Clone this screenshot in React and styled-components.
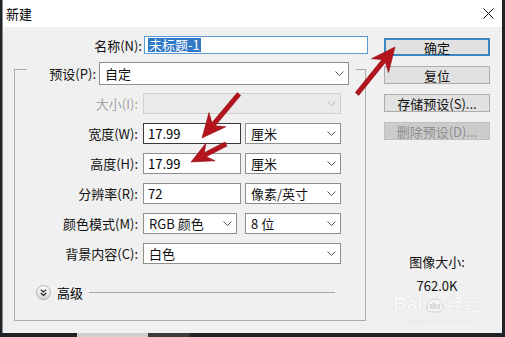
import React from 'react';
import styled, { createGlobalStyle } from 'styled-components';

const Global = createGlobalStyle`
  html, body { margin: 0; padding: 0; background: #1f2429; }
  body {
    font-family: "Noto Sans CJK SC", "Microsoft YaHei", sans-serif;
    font-size: 13px;
    color: #000;
    width: 505px;
    height: 337px;
    overflow: hidden;
  }
  * { box-sizing: border-box; }
`;

const Page = styled.div`
  position: relative;
  width: 505px;
  height: 337px;
  display: flex;
  flex-direction: column;
`;

const Window = styled.div`
  margin-left: 2px;
  width: 500px;
  height: 333px;
  background: #f0f0f0;
  border-left: 1px solid #8c8c8c;
  display: flex;
  flex-direction: column;
`;

const TitleBar = styled.div`
  height: 27px;
  flex: none;
  background: #fff;
  display: flex;
  align-items: center;
  justify-content: space-between;
  padding: 0 8px 0 3px;
  font-size: 13px;
`;

const Body = styled.div`
  flex: 1;
  display: flex;
  padding-top: 9px;
`;

const LeftCol = styled.div`
  width: 367px;
  flex: none;
  display: flex;
  flex-direction: column;
`;

const RightCol = styled.div`
  display: flex;
  flex-direction: column;
  padding: 2px 0 0 14px;
  width: 120px;
`;

const Row = styled.div`
  display: flex;
  align-items: center;
  height: ${p => p.$h || 21}px;
`;

const Label = styled.div`
  width: ${p => p.$w}px;
  flex: none;
  margin-right: ${p => p.$gap ?? 5}px;
  text-align: right;
  white-space: nowrap;
  line-height: 17px;
  color: ${p => (p.$disabled ? '#a3a3a3' : '#111')};
`;

const NameBox = styled.div`
  width: 224px;
  height: 18px;
  background: #fff;
  border: 1px solid #5b9bd5;
  display: flex;
  align-items: center;
  padding-left: 3px;
`;

const Selected = styled.span`
  background: #3179c6;
  color: #fff;
  line-height: 14px;
  padding: 0 1px;
`;

const Group = styled.div`
  margin-left: 11px;
  width: 352px;
  flex: none;
  display: flex;
  flex-direction: column;
`;

const GroupHead = styled.div`
  display: flex;
  align-items: flex-start;
  height: 31px;
`;

const HeadEdge = styled.div`
  margin-top: 15px;
  height: 16px;
  width: ${p => (p.$w ? `${p.$w}px` : 'auto')};
  flex: ${p => (p.$w ? 'none' : 1)};
  border-top: 1px solid #a9a9a9;
  ${p => (p.$side === 'left' ? 'border-left' : 'border-right')}: 1px solid #a9a9a9;
`;

const HeadContent = styled.div`
  display: flex;
  align-items: center;
  padding: 8px 7px 0 0;
`;

const GroupBody = styled.div`
  border: 1px solid #a9a9a9;
  border-top: none;
  display: flex;
  flex-direction: column;
  gap: 9px;
  padding: 8px 0 20px 0;
`;

const TextBox = styled.div`
  width: ${p => p.$w}px;
  flex: none;
  height: 21px;
  margin-right: 4px;
  background: #fff;
  border: 1px solid ${p => (p.$focused ? '#3a3a3a' : '#8f8f8f')};
  display: flex;
  align-items: center;
  padding-left: 4px;
  font-size: 13px;
`;

const SelectBox = styled.div`
  width: ${p => p.$w}px;
  flex: none;
  height: ${p => p.$h || 21}px;
  margin-right: ${p => p.$mr || 0}px;
  background: ${p => (p.$disabled ? '#eaeaea' : '#fff')};
  border: 1px solid ${p => (p.$disabled ? '#cfcfcf' : '#8f8f8f')};
  display: flex;
  align-items: center;
  justify-content: space-between;
  padding: 0 4px 0 5px;
  font-size: 13px;
  color: #111;
`;

const AdvRow = styled.div`
  display: flex;
  align-items: center;
  margin: 12px 0 0 21px;
  height: 15px;
`;

const AdvText = styled.span`
  margin: 0 6px;
  line-height: 17px;
`;

const Rule = styled.div`
  width: 246px;
  height: 1px;
  background: #a8a8a8;
`;

const Buttons = styled.div`
  display: flex;
  flex-direction: column;
  gap: 10px;
`;

const Button = styled.div`
  width: 106px;
  height: 18px;
  display: flex;
  align-items: center;
  justify-content: center;
  font-size: 13px;
  background: ${p => (p.$disabled ? '#cccccc' : '#e1e1e1')};
  color: ${p => (p.$disabled ? '#8e8e8e' : '#111')};
  border: ${p => (p.$primary ? '2px solid #3d86c0' : `1px solid ${p.$disabled ? '#bfbfbf' : '#adadad'}`)};
`;

const Info = styled.div`
  margin-top: 113px;
  width: 106px;
  display: flex;
  flex-direction: column;
  align-items: center;
  color: #111;
`;

const InfoLine = styled.div`
  line-height: 17px;
  margin-bottom: ${p => p.$mb || 0}px;
  font-size: 13px;
`;

const Watermark = styled.div`
  margin-top: 1px;
  font-family: "Liberation Sans", Arial, sans-serif;
  font-weight: bold;
  font-size: 19px;
  line-height: 18px;
  color: #f7f7f7;
  text-shadow: 0 0 1px #cfcfcf;
  white-space: nowrap;
  display: flex;
  align-items: center;
  gap: 2px;
`;

const WatermarkCn = styled.span`
  font-family: "Noto Sans CJK SC", sans-serif;
  font-size: 17px;
`;

const WatermarkUrl = styled.div`
  margin-top: 3px;
  font-family: "Liberation Serif", serif;
  font-size: 9px;
  color: #f4f4f4;
  text-shadow: 0 0 1px #d8d8d8;
  white-space: nowrap;
`;

const BottomStrip = styled.div`
  height: 4px;
  display: flex;
`;

const StripSeg = styled.div`
  width: ${p => p.$w}px;
  background: ${p => p.$c};
  flex: ${p => (p.$w ? 'none' : 1)};
`;

const Overlay = styled.svg`
  position: absolute;
  left: 0;
  top: 0;
  pointer-events: none;
`;

const Chevron = ({ disabled }) => (
  <svg width="9" height="5" viewBox="0 0 9 5">
    <path d="M0.5 0.5 L4.5 4.5 L8.5 0.5" fill="none" stroke={disabled ? '#b5b5b5' : '#555'} strokeWidth="1" />
  </svg>
);

const Select = ({ w, h, mr, disabled, children }) => (
  <SelectBox $w={w} $h={h} $mr={mr} $disabled={disabled}>
    <span>{children}</span>
    <Chevron disabled={disabled} />
  </SelectBox>
);

const CloseIcon = () => (
  <svg width="11" height="11" viewBox="0 0 11 11">
    <path d="M0.5 0.5 L10.5 10.5 M10.5 0.5 L0.5 10.5" stroke="#111" strokeWidth="1" />
  </svg>
);

const AdvIcon = () => (
  <svg width="15" height="15" viewBox="0 0 15 15">
    <defs>
      <linearGradient id="advg" x1="0" y1="0" x2="0" y2="1">
        <stop offset="0" stopColor="#ffffff" />
        <stop offset="1" stopColor="#d6d6d6" />
      </linearGradient>
    </defs>
    <circle cx="7.5" cy="7.5" r="7" fill="url(#advg)" stroke="#b0b0b0" />
    <path d="M4.8 4.6 L7.5 7 L10.2 4.6 M4.8 8 L7.5 10.4 L10.2 8" fill="none" stroke="#222" strokeWidth="1.2" />
  </svg>
);

const BaiduPaw = () => (
  <svg width="20" height="17" viewBox="0 0 20 17">
    <path d="M2 12 C2 6 6 3 10 3 C14 3 18 6 18 12 C18 15 15 16 10 16 C5 16 2 15 2 12 Z" fill="#f7f7f7" stroke="#cfcfcf" />
    <text x="10" y="13" textAnchor="middle" fontFamily="Liberation Sans, sans-serif" fontWeight="bold" fontSize="9" fill="#d8d8d8">du</text>
  </svg>
);

function arrowPoints(tail, tip, L, hw, sw) {
  const dx = tip[0] - tail[0];
  const dy = tip[1] - tail[1];
  const len = Math.hypot(dx, dy);
  const ux = dx / len, uy = dy / len;
  const px = -uy, py = ux;
  const bx = tip[0] - ux * L, by = tip[1] - uy * L;
  const h = sw / 2;
  const pts = [
    [tail[0] + px * h, tail[1] + py * h],
    [bx + ux * 3 + px * h, by + uy * 3 + py * h],
    [bx - ux * 3 + px * hw, by - uy * 3 + py * hw],
    [tip[0], tip[1]],
    [bx - ux * 3 - px * hw, by - uy * 3 - py * hw],
    [bx + ux * 3 - px * h, by + uy * 3 - py * h],
    [tail[0] - px * h, tail[1] - py * h],
  ];
  return pts.map(p => p.map(v => v.toFixed(1)).join(',')).join(' ');
}

const arrows = [
  { tail: [357, 94], tip: [395, 47], L: 21, hw: 11 },
  { tail: [239, 94], tip: [202, 138], L: 21, hw: 11 },
  { tail: [226, 144], tip: [191, 162], L: 19, hw: 10 },
];

export default function App() {
  return (
    <Page>
      <Global />
      <Window>
        <TitleBar>
          <span>新建</span>
          <CloseIcon />
        </TitleBar>
        <Body>
          <LeftCol>
            <Row $h={18}>
              <Label $w={139} $gap={2}>名称(N):</Label>
              <NameBox>
                <Selected>未标题-1</Selected>
              </NameBox>
            </Row>
            <Group>
              <GroupHead>
                <HeadEdge $w={13} $side="left" />
                <HeadContent>
                  <Label $w={69} $gap={3}>预设(P):</Label>
                  <Select w={250} h={23}>自定</Select>
                </HeadContent>
                <HeadEdge $side="right" />
              </GroupHead>
              <GroupBody>
                <Row>
                  <Label $w={123} $disabled>大小(I):</Label>
                  <Select w={198} disabled />
                </Row>
                <Row>
                  <Label $w={123}>宽度(W):</Label>
                  <TextBox $w={98} $focused>17.99</TextBox>
                  <Select w={96}>厘米</Select>
                </Row>
                <Row>
                  <Label $w={123}>高度(H):</Label>
                  <TextBox $w={98}>17.99</TextBox>
                  <Select w={96}>厘米</Select>
                </Row>
                <Row>
                  <Label $w={123}>分辨率(R):</Label>
                  <TextBox $w={98}>72</TextBox>
                  <Select w={96}>像素/英寸</Select>
                </Row>
                <Row>
                  <Label $w={123}>颜色模式(M):</Label>
                  <Select w={94} mr={8}>RGB 颜色</Select>
                  <Select w={96}>8 位</Select>
                </Row>
                <Row>
                  <Label $w={123}>背景内容(C):</Label>
                  <Select w={198}>白色</Select>
                </Row>
                <AdvRow>
                  <AdvIcon />
                  <AdvText>高级</AdvText>
                  <Rule />
                </AdvRow>
              </GroupBody>
            </Group>
          </LeftCol>
          <RightCol>
            <Buttons>
              <Button $primary>确定</Button>
              <Button>复位</Button>
              <Button>存储预设(S)...</Button>
              <Button $disabled>删除预设(D)...</Button>
            </Buttons>
            <Info>
              <InfoLine $mb={7}>图像大小:</InfoLine>
              <InfoLine>762.0K</InfoLine>
              <Watermark>
                <span>Bai</span>
                <BaiduPaw />
                <WatermarkCn>经验</WatermarkCn>
              </Watermark>
              <WatermarkUrl>jingyan.baidu.com</WatermarkUrl>
            </Info>
          </RightCol>
        </Body>
      </Window>
      <BottomStrip>
        <StripSeg $w={77} $c="#1f2429" />
        <StripSeg $w={71} $c="#cfcfcf" />
        <StripSeg $w={42} $c="#3b3b3b" />
        <StripSeg $c="#1f2429" />
      </BottomStrip>
      <Overlay width="505" height="337" viewBox="0 0 505 337">
        {arrows.map((a, i) => (
          <polygon
            key={i}
            points={arrowPoints(a.tail, a.tip, a.L, a.hw, 4.5)}
            fill="#b4141c"
            stroke="#8e0d13"
            strokeWidth="0.6"
            strokeLinejoin="round"
          />
        ))}
      </Overlay>
    </Page>
  );
}
